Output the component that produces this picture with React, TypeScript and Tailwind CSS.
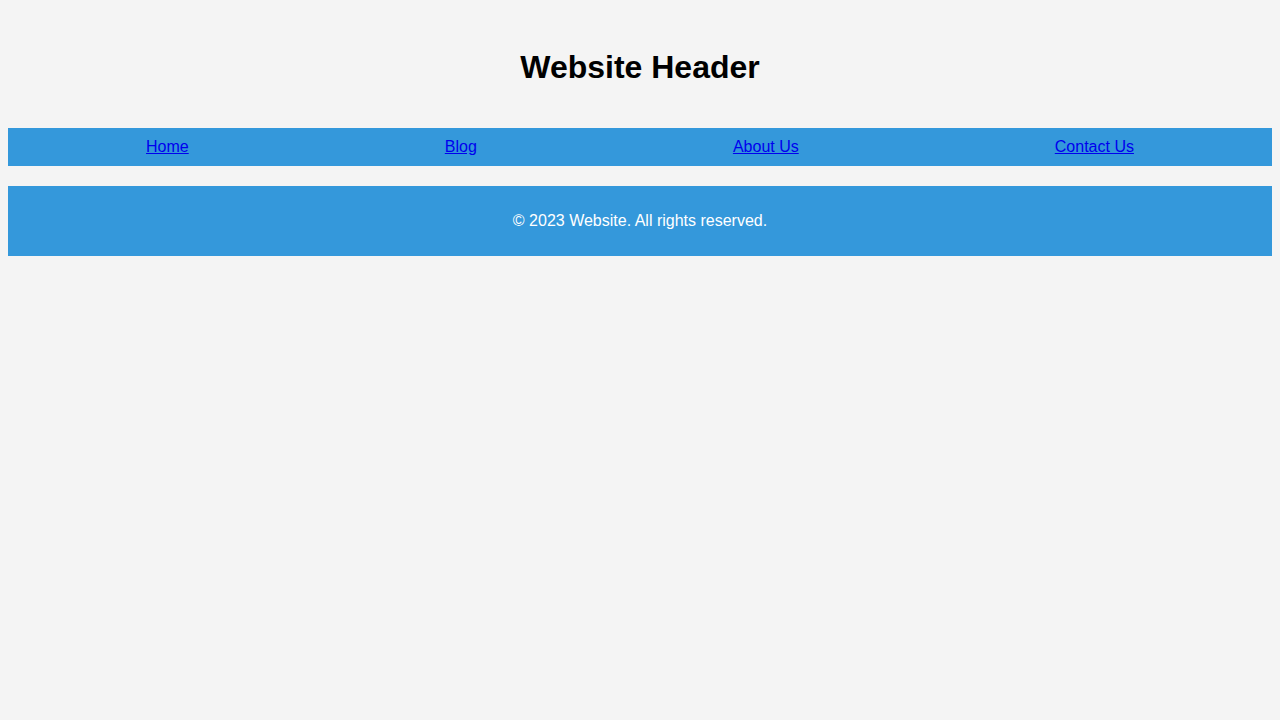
export default function App() {
  return (
    <div className="min-h-screen bg-[#f4f4f4] p-2 text-black" style={{ fontFamily: '"Liberation Sans", Arial, sans-serif' }}>
      <header className="p-5 text-center">
        <h1 className="my-[21.44px] text-[32px] font-bold leading-[normal]">Website Header</h1>
      </header>
      <nav className="flex justify-around bg-[#3498db] p-[10px] text-base leading-[normal]">
        <a href="#" className="text-[#0000ee] underline">Home</a>
        <a href="#" className="text-[#0000ee] underline">Blog</a>
        <a href="#" className="text-[#0000ee] underline">About Us</a>
        <a href="#" className="text-[#0000ee] underline">Contact Us</a>
      </nav>
      <footer className="mt-5 bg-[#3498db] p-[10px] text-center text-white">
        <p className="my-4 text-base leading-[normal]">© 2023 Website. All rights reserved.</p>
      </footer>
    </div>
  );
}
